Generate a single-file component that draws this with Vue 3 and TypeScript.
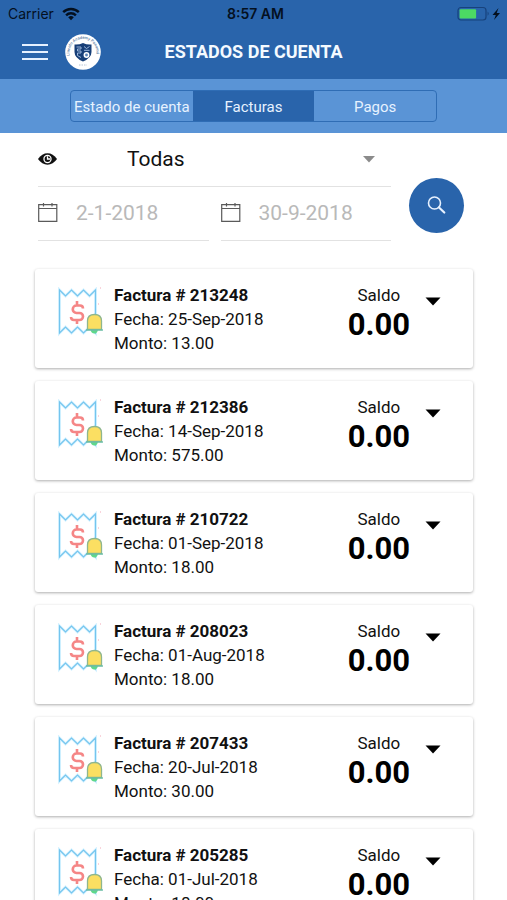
<script setup lang="ts">
import { ref } from 'vue'

interface Invoice {
  id: string
  date: string
  amount: string
  balance: string
}

const tabs: string[] = ['Estado de cuenta', 'Facturas', 'Pagos']
const activeTab = ref('Facturas')
const filter = ref('Todas')
const from = ref('2-1-2018')
const to = ref('30-9-2018')

const invoices: Invoice[] = [
  { id: '213248', date: '25-Sep-2018', amount: '13.00', balance: '0.00' },
  { id: '212386', date: '14-Sep-2018', amount: '575.00', balance: '0.00' },
  { id: '210722', date: '01-Sep-2018', amount: '18.00', balance: '0.00' },
  { id: '208023', date: '01-Aug-2018', amount: '18.00', balance: '0.00' },
  { id: '207433', date: '20-Jul-2018', amount: '30.00', balance: '0.00' },
  { id: '205285', date: '01-Jul-2018', amount: '18.00', balance: '0.00' },
]
</script>

<template>
  <div class="screen">
    <header class="header">
      <div class="status">
        <div class="carrier">
          <span>Carrier</span>
          <svg width="18" height="14" viewBox="0 0 18 14" aria-hidden="true">
            <g fill="none" stroke="#04101f" stroke-width="2.4">
              <path d="M1.2 5.2a11 11 0 0 1 15.6 0" />
              <path d="M4.1 8.3a7 7 0 0 1 9.8 0" />
            </g>
            <path d="M9 13.2 6.2 10.3a4 4 0 0 1 5.6 0z" fill="#04101f" />
          </svg>
        </div>
        <strong class="clock">8:57 AM</strong>
        <div class="battery">
          <svg width="46" height="16" viewBox="0 0 46 16" aria-hidden="true">
            <rect x="1" y="1.5" width="28" height="12.5" rx="3" fill="none" stroke="#17427c" stroke-width="1.2" />
            <rect x="2.6" y="3.200" width="16.5" height="9.200" rx="1" fill="#4cd964" />
            <path d="M30.6 5.5q2.2 2.1 0 4.300z" fill="#17427c" />
            <path d="m41.500 2-6 7h3.300l-1.800 5 6-7h-3.300z" fill="#04101f" />
          </svg>
        </div>
      </div>
      <div class="bar">
        <div class="bar-start">
          <button class="menu" type="button" aria-label="Menú">
            <svg width="26" height="18" viewBox="0 0 26 18" aria-hidden="true">
              <path d="M0 2h26M0 9h26M0 16h26" stroke="#e6f1ff" stroke-width="2.1" />
            </svg>
          </button>
          <svg class="logo" width="36" height="36" viewBox="0 0 36 36" aria-hidden="true">
            <defs>
              <path id="logo-arc" d="M5.500 23.500A13.500 13.500 0 1 1 30.500 23.500" />
            </defs>
            <circle cx="18" cy="18" r="17.800" fill="#fff" />
            <text class="logo-text"><textPath href="#logo-arc" startOffset="2">Lincoln Academy Panamá</textPath></text>
            <path d="M9.500 10.500q4.500.5 8.500-1.500 4 2 8.500 1.500v7.500q0 6-8.500 9.500-8.500-3.500-8.500-9.500z" fill="#173f78" />
            <path d="M11.500 13h4.500v2h-3.500v2H16v2h-3.500v2.500l3.500 2M19 12.500l2.500 2 3-2M19 16.300h5.500" fill="none" stroke="#a9c3e4" stroke-width=".9" />
            <circle cx="21.500" cy="21" r="2.200" fill="#5d87bb" stroke="#fff" stroke-width="1.500" />
            <path d="M14 31h8" stroke="#b9c6d6" stroke-width="1" stroke-dasharray="1.500 1" />
          </svg>
        </div>
        <h1 class="title">ESTADOS DE CUENTA</h1>
      </div>
    </header>

    <nav class="tabs" aria-label="Secciones">
      <div class="segments">
        <button
          v-for="tab in tabs"
          :key="tab"
          type="button"
          class="segment"
          :class="{ active: tab === activeTab }"
          :aria-pressed="tab === activeTab"
          @click="activeTab = tab"
        >{{ tab }}</button>
      </div>
    </nav>

    <form class="filters" @submit.prevent>
      <div class="fields">
        <label class="field type-field">
          <svg width="19" height="12" viewBox="0 0 19 12" aria-hidden="true">
            <path d="M0 6Q4 .3 9.500.3T19 6q-4 5.700-9.500 5.700T0 6z" fill="#111" />
            <circle cx="9.500" cy="6" r="4.200" fill="#fff" />
            <circle cx="9.500" cy="6" r="2.900" fill="#111" />
            <path d="M9.500 3.300v2.700h2.500" fill="none" stroke="#fff" stroke-width="1.300" />
          </svg>
          <select v-model="filter" class="select" aria-label="Tipo de factura">
            <option>Todas</option>
            <option>Pagadas</option>
            <option>Pendientes</option>
          </select>
          <svg class="select-arrow" width="12" height="7" viewBox="0 0 12 7" aria-hidden="true">
            <path d="M0 0h12L6 6.500z" fill="#8b8b8b" />
          </svg>
        </label>
        <div class="dates">
          <label class="field">
            <svg width="20" height="20" viewBox="0 0 20 20" aria-hidden="true">
              <path d="M.7 1.700h18.100v16.600H.7zM.7 5.500h18.100M5.500 0v3.500M14 0v3.500" fill="none" stroke="#5a5a5a" stroke-width="1.200" />
            </svg>
            <input v-model="from" class="date" type="text" aria-label="Desde" />
          </label>
          <label class="field">
            <svg width="20" height="20" viewBox="0 0 20 20" aria-hidden="true">
              <path d="M.7 1.700h18.100v16.600H.7zM.7 5.500h18.100M5.500 0v3.500M14 0v3.500" fill="none" stroke="#5a5a5a" stroke-width="1.200" />
            </svg>
            <input v-model="to" class="date" type="text" aria-label="Hasta" />
          </label>
        </div>
      </div>
      <button class="search" type="submit" aria-label="Buscar">
        <svg width="20" height="20" viewBox="0 0 20 20" aria-hidden="true">
          <circle cx="7.500" cy="7" r="6" fill="none" stroke="#e6f1ff" stroke-width="1.600" />
          <path d="m12 11.500 5.300 5" stroke="#e6f1ff" stroke-width="2.200" stroke-linecap="round" />
        </svg>
      </button>
    </form>

    <main class="list">
      <article v-for="invoice in invoices" :key="invoice.id" class="card">
        <svg class="receipt" width="48" height="50" viewBox="0 0 48 50" aria-hidden="true">
          <path d="M2.500 3l6 6 6-6 6 6 6-6 6 6 6-6v43l-6-6-6 6-6-6-6 6-6-6-6 6z" fill="#fff" stroke="#d8f3ff" stroke-width="3" />
          <path d="M2.500 3l6 6 6-6 6 6 6-6 6 6 6-6v43l-6-6-6 6-6-6-6 6-6-6-6 6z" fill="none" stroke="#74c5ee" stroke-width="1.200" />
          <path d="M26 21.500q0-3-3-3h-3.500a3.500 3.500 0 0 0 0 7.500h3a3.500 3.500 0 0 1 0 7H17q-3 0-3-3M20 14v4.500M20 33v4" fill="none" stroke="#f58686" stroke-width="2.600" />
          <path d="M33.500 42.500h7.500q-.5 4-3.700 4t-3.800-4z" fill="#5fd88b" />
          <path d="M30.500 42.500V34q0-6.500 7-6.500t7 6.500v8.500z" fill="#fbdf62" stroke="#8fb68d" stroke-width="1.300" />
          <path d="M29 43h17" stroke="#67bda8" stroke-width="1.400" />
          <path d="M43 1h1M41 17h1" stroke="#f3a9b8" stroke-width="1" />
        </svg>
        <div class="details">
          <h2 class="number">Factura # {{ invoice.id }}</h2>
          <p>Fecha: {{ invoice.date }}</p>
          <p>Monto: {{ invoice.amount }}</p>
        </div>
        <div class="balance">
          <span>Saldo</span>
          <strong class="total">{{ invoice.balance }}</strong>
        </div>
        <button class="expand" type="button" :aria-label="`Ver factura ${invoice.id}`">
          <svg width="16" height="9" viewBox="0 0 16 9" aria-hidden="true">
            <path d="M.5.5h15L8 8.500z" fill="#000" />
          </svg>
        </button>
      </article>
    </main>
  </div>
</template>

<style>
body {
  margin: 0;
  background: #fff;
}
</style>

<style scoped>
* {
  box-sizing: border-box;
}

.screen {
  display: flex;
  flex-direction: column;
  height: 100vh;
  overflow: hidden;
  font-family: Roboto, "Liberation Sans", sans-serif;
  color: #111;
}

button {
  padding: 0;
  border: 0;
  font: inherit;
  color: inherit;
  background: none;
  cursor: pointer;
}

svg {
  display: block;
  flex: none;
}

h1,
h2,
p {
  margin: 0;
}

.header {
  flex: none;
  background: #2964ab;
}

.status {
  display: grid;
  grid-template-columns: 1fr auto 1fr;
  align-items: center;
  height: 27px;
  padding: 0 4px 0 8px;
  font-family: Inter, Roboto, sans-serif;
  font-size: 14px;
  color: #04101f;
}

.carrier {
  display: flex;
  align-items: center;
  gap: 8px;
}

.clock {
  font-weight: 600;
}

.battery {
  justify-self: end;
}

.bar {
  display: grid;
  grid-template-columns: 1fr auto 1fr;
  align-items: center;
  height: 52px;
  padding: 0 22px 2px;
}

.bar-start {
  display: flex;
  align-items: center;
  gap: 17px;
}

.logo-text {
  font-size: 4px;
  font-weight: 700;
  fill: #6f8cae;
}

.title {
  font-size: 18px;
  line-height: 24px;
  font-weight: 700;
  color: #f4faff;
}

.tabs {
  flex: none;
  padding: 11px 70px;
  background: #5a94d6;
}

.segments {
  display: grid;
  grid-template-columns: repeat(3, minmax(0, 1fr));
  height: 32px;
  border: 1px solid #2f6db5;
  border-radius: 4px;
  overflow: hidden;
}

.segment {
  display: flex;
  align-items: center;
  justify-content: center;
  padding-top: 2px;
  font-size: 15px;
  color: #e6f2ff;
  white-space: nowrap;
}

.segment.active {
  background: #2964ab;
}

.filters {
  flex: none;
  display: flex;
  align-items: center;
  gap: 18px;
  padding: 0 43px 0 38px;
}

.fields {
  flex: 1;
  min-width: 0;
}

.field {
  display: flex;
  align-items: center;
  gap: 18px;
  min-width: 0;
  height: 54px;
  padding-bottom: 1px;
  border-bottom: 1px solid #e2e2e2;
}

.type-field {
  padding-right: 16px;
}

.select,
.date {
  flex: 1;
  min-width: 0;
  width: 100%;
  height: 32px;
  margin: 0;
  padding: 0;
  border: 0;
  outline: 0;
  appearance: none;
  background: none;
  font-family: inherit;
  font-size: 21px;
}

.select {
  padding-left: 52px;
  color: #111;
}

.date {
  color: #b9b9b9;
}

.dates {
  display: grid;
  grid-template-columns: repeat(2, minmax(0, 1fr));
  gap: 12px;
}

.search {
  flex: none;
  display: grid;
  place-items: center;
  width: 55px;
  height: 55px;
  margin-top: 37px;
  border-radius: 50%;
  background: #2964ab;
}

.list {
  flex: 1;
  min-height: 0;
  display: flex;
  flex-direction: column;
  gap: 13px;
  padding: 28px 34px 27px 35px;
  overflow-y: auto;
  scrollbar-width: none;
}

.card {
  flex: none;
  display: flex;
  align-items: flex-start;
  padding: 14px 32px 13px 22px;
  border-radius: 3px;
  background: #fff;
  box-shadow: 0 1px 3px rgba(0, 0, 0, 0.32);
  font-size: 17px;
  line-height: 24px;
}

.receipt {
  margin-top: 4px;
}

.details {
  flex: 1;
  padding-left: 9px;
}

.number {
  font-size: 17px;
  line-height: 24px;
  font-weight: 700;
}

.balance {
  display: flex;
  flex-direction: column;
  align-items: center;
}

.total {
  font-size: 31px;
  line-height: 36px;
  font-weight: 700;
  color: #000;
}

.expand {
  margin: 14px 0 0 15px;
}
</style>
